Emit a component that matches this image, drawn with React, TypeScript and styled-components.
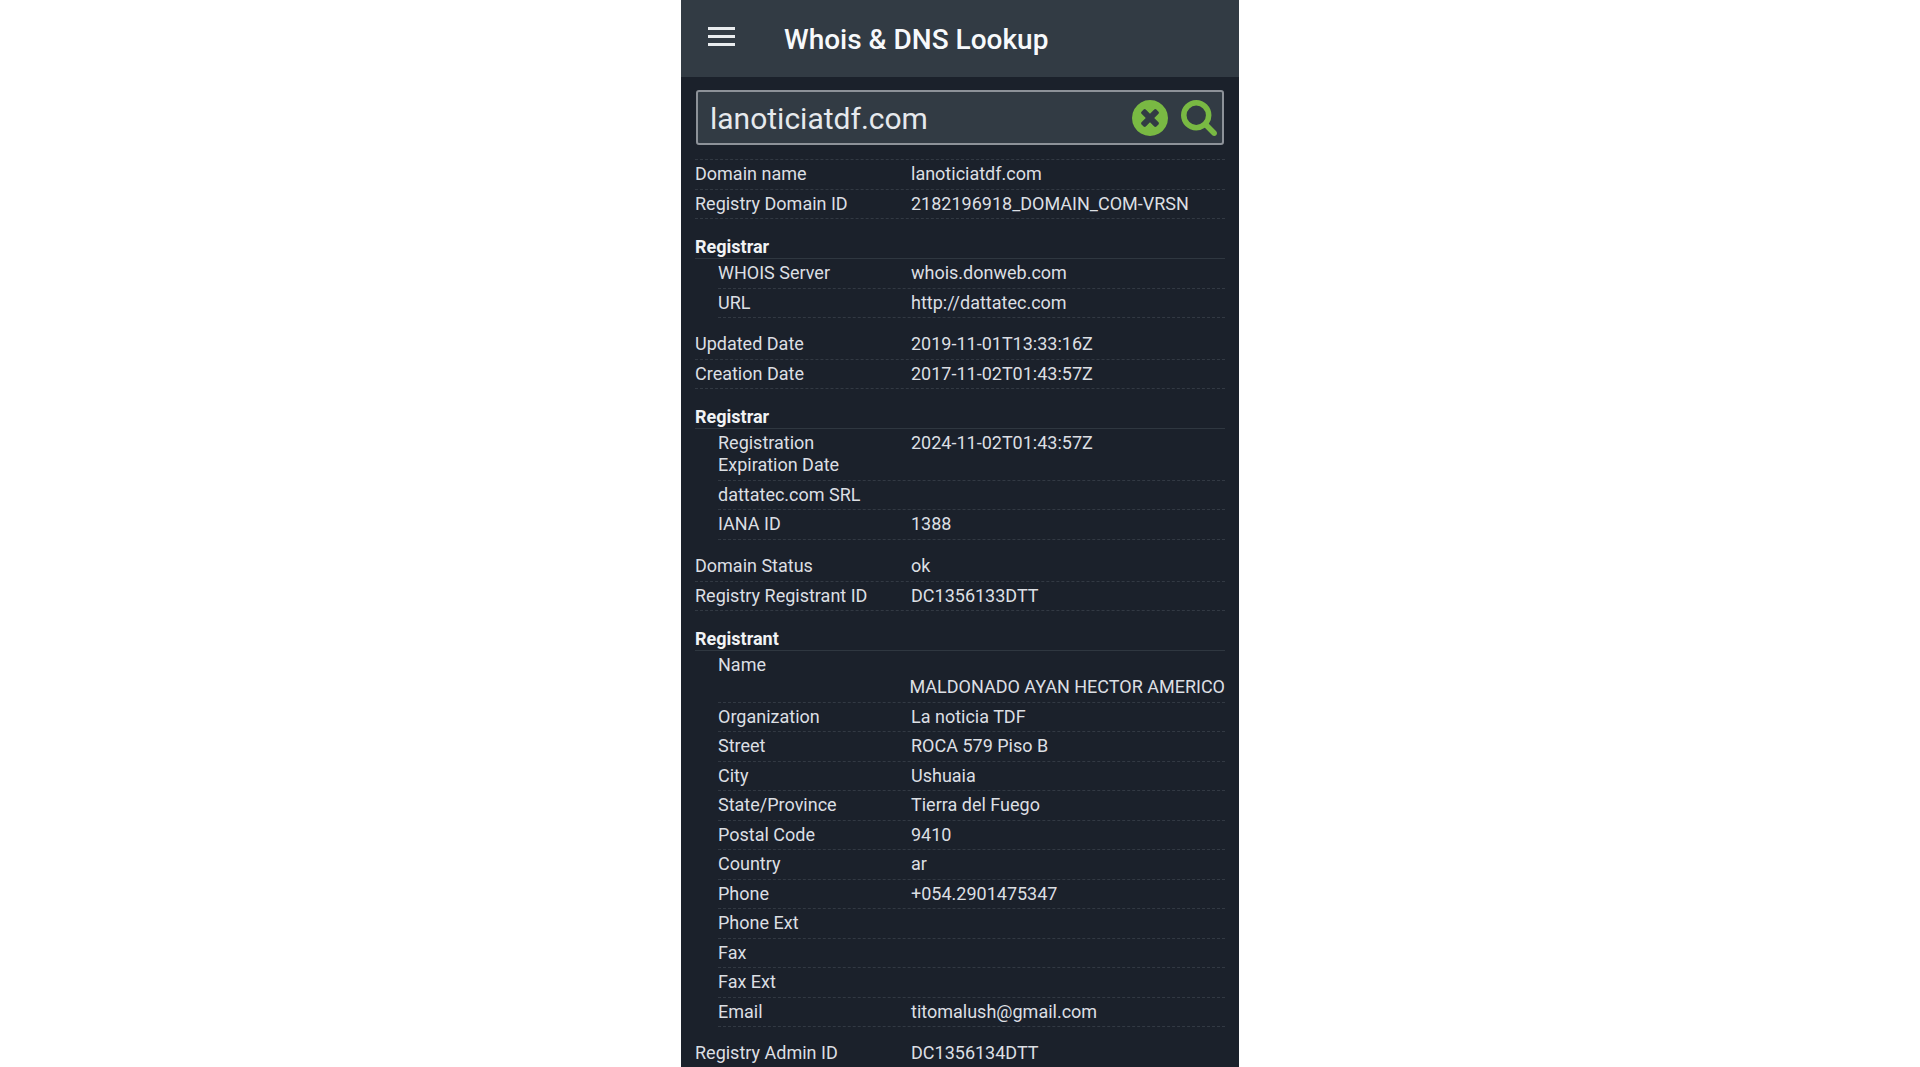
import React, { useState } from "react";
import styled, { createGlobalStyle } from "styled-components";

const GlobalStyle = createGlobalStyle`
  *, *::before, *::after { box-sizing: border-box; }
  html, body { margin: 0; background: #ffffff; }
  body { font-family: Roboto, "Liberation Sans", sans-serif; }
`;

const Viewport = styled.div`
  display: flex;
  justify-content: center;
  height: 100vh;
  overflow: hidden;
`;

const Panel = styled.div`
  display: flex;
  flex-direction: column;
  width: 100%;
  max-width: 558px;
  min-height: 100%;
  background: #1b212b;
  color: #dcdfe3;
  overflow: hidden;
`;

const Header = styled.header`
  display: flex;
  flex: none;
  align-items: flex-start;
  gap: 49px;
  height: 77px;
  padding: 21px 27px;
  background: #323b44;
`;

const IconButton = styled.button`
  display: flex;
  flex: none;
  padding: 6px 0;
  border: 0;
  background: none;
  color: inherit;
  cursor: pointer;
`;

const Title = styled.h1`
  margin: 0;
  color: #f7f9fb;
  font-size: 28px;
  font-weight: 500;
  line-height: 38px;
`;

const Main = styled.main`
  flex: none;
  padding: 13px 14px 0;
`;

const SearchBox = styled.form`
  display: flex;
  align-items: center;
  gap: 13px;
  height: 55px;
  margin: 0 1px 14px;
  padding: 0 5px 0 12px;
  border: 2px solid #8d9299;
  border-radius: 3px;
  background: #323b44;
  color: #79b943;
`;

const SearchInput = styled.input`
  flex: 1;
  min-width: 0;
  padding: 2px 0 0;
  border: 0;
  outline: 0;
  background: none;
  color: #e6e9ed;
  font: 400 30px/40px Roboto, "Liberation Sans", sans-serif;
`;

const Heading = styled.h2`
  margin: 0;
  padding-top: 17px;
  border-bottom: 1px solid #2f3740;
  color: #f1f3f5;
  font-size: 18px;
  font-weight: 700;
  line-height: 22px;
`;

const Fields = styled.dl<{ $nested?: boolean; $first?: boolean }>`
  margin: 0;
  padding-left: ${(p) => (p.$nested ? "23px" : "0")};
  padding-bottom: ${(p) => (p.$nested ? "12px" : "0")};
  border-top: ${(p) => (p.$first ? "1px dashed #323943" : "0")};
`;

const Field = styled.div`
  display: flex;
  flex-wrap: wrap;
  padding: 3px 0 4px;
  border-bottom: 1px dashed #323943;
  font-size: 18px;
  line-height: 22px;

  &:nth-child(even) {
    padding-bottom: 3px;
  }
`;

const Label = styled.dt<{ $nested?: boolean; $ownLine?: boolean }>`
  width: ${(p) => (p.$ownLine ? "100%" : p.$nested ? "150px" : "200px")};
`;

const Value = styled.dd`
  min-width: 314px;
  margin: 0 0 0 auto;
  white-space: nowrap;
`;

type Entry = { label: string; value?: string; ownLine?: boolean };
type Group = { heading?: string; entries: Entry[] };

const groups: Group[] = [
  {
    entries: [
      { label: "Domain name", value: "lanoticiatdf.com" },
      { label: "Registry Domain ID", value: "2182196918_DOMAIN_COM-VRSN" },
    ],
  },
  {
    heading: "Registrar",
    entries: [
      { label: "WHOIS Server", value: "whois.donweb.com" },
      { label: "URL", value: "http://dattatec.com" },
    ],
  },
  {
    entries: [
      { label: "Updated Date", value: "2019-11-01T13:33:16Z" },
      { label: "Creation Date", value: "2017-11-02T01:43:57Z" },
    ],
  },
  {
    heading: "Registrar",
    entries: [
      { label: "Registration Expiration Date", value: "2024-11-02T01:43:57Z" },
      { label: "dattatec.com SRL" },
      { label: "IANA ID", value: "1388" },
    ],
  },
  {
    entries: [
      { label: "Domain Status", value: "ok" },
      { label: "Registry Registrant ID", value: "DC1356133DTT" },
    ],
  },
  {
    heading: "Registrant",
    entries: [
      { label: "Name", value: "MALDONADO AYAN HECTOR AMERICO", ownLine: true },
      { label: "Organization", value: "La noticia TDF" },
      { label: "Street", value: "ROCA 579 Piso B" },
      { label: "City", value: "Ushuaia" },
      { label: "State/Province", value: "Tierra del Fuego" },
      { label: "Postal Code", value: "9410" },
      { label: "Country", value: "ar" },
      { label: "Phone", value: "+054.2901475347" },
      { label: "Phone Ext" },
      { label: "Fax" },
      { label: "Fax Ext" },
      { label: "Email", value: "titomalush@gmail.com" },
    ],
  },
  {
    entries: [{ label: "Registry Admin ID", value: "DC1356134DTT" }],
  },
];

const MenuIcon = () => (
  <svg width="27" height="19" viewBox="0 0 27 19" fill="#e9ecef" aria-hidden="true">
    <path d="M0 0h27v3H0zM0 8h27v3H0zM0 16h27v3H0z" />
  </svg>
);

const ClearIcon = () => (
  <svg width="36" height="36" viewBox="0 128 1536 1536" fill="currentColor" aria-hidden="true">
    <path d="M1149 1122q0-26-19-45l-181-181 181-181q19-19 19-45 0-27-19-46l-90-90q-19-19-46-19-26 0-45 19l-181 181-181-181q-19-19-45-19-27 0-46 19l-90 90q-19 19-19 46 0 26 19 45l181 181-181 181q-19 19-19 45 0 27 19 46l90 90q19 19 46 19 26 0 45-19l181-181 181 181q19 19 45 19 27 0 46-19l90-90q19-19 19-46zm387-226q0 209-103 385.5t-279.5 279.5-385.5 103-385.5-103-279.5-279.5-103-385.5 103-385.5 279.5-279.5 385.5-103 385.5 103 279.5 279.5 103 385.5z" />
  </svg>
);

const SearchIcon = () => (
  <svg width="36" height="36" viewBox="64 128 1664 1664" fill="currentColor" aria-hidden="true">
    <path d="M1216 832q0-185-131.5-316.5t-316.5-131.5-316.5 131.5-131.5 316.5 131.5 316.5 316.5 131.5 316.5-131.5 131.5-316.5zm512 832q0 52-38 90t-90 38q-54 0-90-38l-343-342q-179 124-399 124-143 0-273.5-55.5t-225-150-150-225-55.5-273.5 55.5-273.5 150-225 225-150 273.5-55.5 273.5 55.5 225 150 150 225 55.5 273.5q0 220-124 399l343 343q37 37 37 90z" />
  </svg>
);

export default function App() {
  const [query, setQuery] = useState("lanoticiatdf.com");

  return (
    <Viewport>
      <GlobalStyle />
      <Panel>
        <Header>
          <IconButton type="button" aria-label="Menu">
            <MenuIcon />
          </IconButton>
          <Title>Whois &amp; DNS Lookup</Title>
        </Header>
        <Main>
          <SearchBox onSubmit={(e) => e.preventDefault()}>
            <SearchInput
              type="text"
              aria-label="Domain"
              spellCheck={false}
              value={query}
              onChange={(e) => setQuery(e.target.value)}
            />
            <IconButton type="button" aria-label="Clear" onClick={() => setQuery("")}>
              <ClearIcon />
            </IconButton>
            <IconButton type="submit" aria-label="Search">
              <SearchIcon />
            </IconButton>
          </SearchBox>
          {groups.map((group, i) => {
            const nested = Boolean(group.heading);
            return (
              <section key={i}>
                {group.heading && <Heading>{group.heading}</Heading>}
                <Fields $nested={nested} $first={i === 0}>
                  {group.entries.map(({ label, value, ownLine }) => (
                    <Field key={label}>
                      <Label $nested={nested} $ownLine={ownLine}>
                        {label}
                      </Label>
                      <Value>{value}</Value>
                    </Field>
                  ))}
                </Fields>
              </section>
            );
          })}
        </Main>
      </Panel>
    </Viewport>
  );
}
